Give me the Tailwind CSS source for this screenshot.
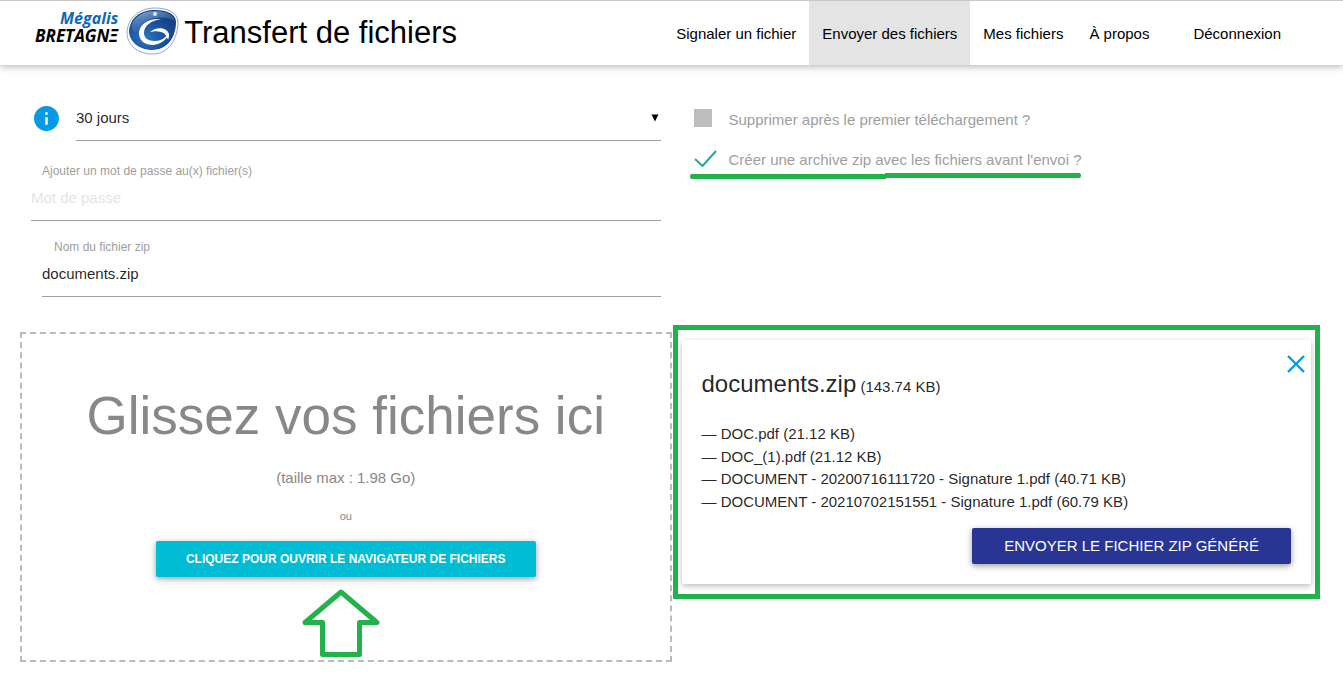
<!DOCTYPE html>
<html lang="fr">
<head>
    <meta charset="UTF-8">
    <meta name="viewport" content="width=device-width, initial-scale=1.0">
    <title>Mégalis Bretagne - Transfert de fichiers</title>
    <script src="https://cdn.jsdelivr.net/npm/@tailwindcss/browser@4"></script>
</head>
<body class="bg-white min-h-screen font-['Liberation_Sans',Arial,sans-serif] text-[15px] text-black/87">

    <!-- Header -->
    <header class="flex justify-between h-[65px] border-t border-[#c8c8c8] bg-white text-black shadow-[0_2px_5px_0_rgba(0,0,0,0.16),0_2px_10px_0_rgba(0,0,0,0.12)]">
        <a href="#" class="flex items-center pl-[35px]" aria-label="Mégalis Bretagne, transfert de fichiers">
            <span class="flex flex-col items-end pb-3 font-['Open_Sans',sans-serif] font-bold italic leading-[18px]">
                <span class="text-base leading-[18px] text-[#0f6ab4]">Mégalis</span>
                <span class="text-[17px] leading-[18px] text-black">BRETAGNΞ</span>
            </span>
            <svg class="ml-2 mb-1 w-[54px] h-[50px]" viewBox="0 0 54 50" aria-hidden="true">
                <defs>
                    <radialGradient id="globe" cx="0.35" cy="0.7" r="0.8">
                        <stop offset="0" stop-color="#2a74be"/>
                        <stop offset="0.5" stop-color="#1b529c"/>
                        <stop offset="1" stop-color="#133b7a"/>
                    </radialGradient>
                    <linearGradient id="shine" x1="0" y1="0" x2="0.6" y2="1">
                        <stop offset="0" stop-color="#a9c3e0" stop-opacity="0.9"/>
                        <stop offset="1" stop-color="#2a66ae" stop-opacity="0.1"/>
                    </linearGradient>
                </defs>
                <path d="M1 26C2 12 13 2 29 2c13 0 23 5 23 14 0 16-9 32-25 32C11 48 1 39 1 26z" fill="#fff" stroke="#8fa9c6"/>
                <path d="M3 25C4 12 14 4 29 4c12 0 21 4 21 12 0 14-8 28-23 28C12 44 3 36 3 25z" fill="url(#globe)"/>
                <path d="M6 18C10 9 18 5 29 5c11 0 20 4 20 10-5-3-12-4-18-3-10 1-17 6-20 15-4-1-6-4-5-9z" fill="url(#shine)"/>
                <path d="M3 28c3 10 12 16 23 16 9 0 15-4 19-10-2 8-9 13-18 13C14 47 4 39 3 28z" fill="#fff" opacity="0.7"/>
                <path d="M35 13c-12-1-22 5-22 14 0 8 6 12 14 12 8-1 14-5 16-12-4 5-8 8-14 8-7 0-11-3-11-8 0-7 6-12 17-14z" fill="#fff"/>
                <path d="M24 26c4-4 12-5 16-2 3 2 4 5 2 10-1-4-3-7-7-8-3-1-7-1-11 0z" fill="#fff"/>
                <circle cx="29" cy="8" r="2" fill="#dfeaf6"/>
            </svg>
            <span class="ml-1 text-[31px] leading-[64px]">Transfert de fichiers</span>
        </a>
        <nav class="flex pr-[49px] leading-[66px]">
            <a href="#" class="h-full px-[13px]">Signaler un fichier</a>
            <a href="#" class="h-full px-[13px] bg-[#e4e4e4]">Envoyer des fichiers</a>
            <a href="#" class="h-full px-[13px]">Mes fichiers</a>
            <a href="#" class="h-full px-[13px]">À propos</a>
            <a href="#" class="h-full px-[13px] ml-[18px]">Déconnexion</a>
        </nav>
    </header>

    <main class="px-5 pt-[31px] pb-4">
        <!-- Options -->
        <form class="grid grid-cols-2">
            <div class="px-[11px]">
                <div class="flex items-center">
                    <svg class="ml-[3px] mr-[17px] w-[25px] h-[25px] shrink-0" viewBox="2 2 20 20" fill="#039be5" aria-hidden="true">
                        <path d="M12 2C6.48 2 2 6.48 2 12s4.480 10 10 10 10-4.480 10-10S17.520 2 12 2zm1 15h-2v-6h2v6zm0-8h-2V7h2v2z"/>
                    </svg>
                    <div class="relative grow">
                        <select aria-label="Durée de conservation" class="block appearance-none w-full h-[45px] border-b border-[#9e9e9e] bg-transparent outline-none">
                            <option>30 jours</option>
                        </select>
                        <svg class="absolute right-[2px] top-[18px] w-2 h-2 pointer-events-none" viewBox="0 0 8 8" aria-hidden="true">
                            <path d="M0.500 0.500h7L4 7.500z"/>
                        </svg>
                    </div>
                </div>
                <div class="mt-[22px]">
                    <label for="password" class="block pl-[11px] text-xs leading-4 text-[#9e9e9e]">Ajouter un mot de passe au(x) fichier(s)</label>
                    <input type="password" id="password" placeholder="Mot de passe" class="block w-full h-[42px] pb-1 border-b border-[#9e9e9e] outline-none placeholder:text-[#e4e4e4]">
                </div>
                <div class="mt-[18px] pl-[11px]">
                    <label for="zip-name" class="block pl-3 text-xs leading-4 text-[#9e9e9e]">Nom du fichier zip</label>
                    <input type="text" id="zip-name" value="documents.zip" class="block w-full h-[42px] pb-1 border-b border-[#9e9e9e] outline-none">
                </div>
            </div>
            <div class="flex flex-col items-start pl-[22px] pt-3 text-[#9e9e9e]">
                <label class="flex items-start h-6 leading-6">
                    <input type="checkbox" disabled class="appearance-none w-[18px] h-[18px] mt-px mr-[17px] bg-[#bdbdbd]">
                    Supprimer après le premier téléchargement ?
                </label>
                <label class="flex items-start h-6 mt-4 leading-6">
                    <span class="grid w-[35px] mt-px">
                        <input type="checkbox" checked class="col-start-1 row-start-1 appearance-none w-6 h-[18px]">
                        <svg class="col-start-1 row-start-1 w-6 h-[18px] pointer-events-none" viewBox="0 0 24 18" fill="none" stroke="#26a69a" stroke-width="2" aria-hidden="true">
                            <path d="M1 10L8.500 17 22 2"/>
                        </svg>
                    </span>
                    Créer une archive zip avec les fichiers avant l'envoi ?
                </label>
                <svg class="-ml-1 mt-px w-[391px] h-[6px]" viewBox="0 0 391 6" fill="#22b14c" aria-hidden="true">
                    <path d="M1 1h194V0h195l1 2v1l-1 2H196v1H1L0 4V3z"/>
                </svg>
            </div>
        </form>

        <div class="grid grid-cols-2 items-start mt-7">
            <!-- Drop zone -->
            <section class="flex flex-col items-center mt-[7px] h-[330px] border-2 border-dashed border-[#bbb] text-[#888]">
                <h2 class="mt-[50px] text-[53px] leading-[64px]">Glissez vos fichiers ici</h2>
                <p class="mt-[18px] leading-6">(taille max : 1.98 Go)</p>
                <p class="mt-[18px] text-[11px] leading-4">ou</p>
                <button type="button" class="mt-[17px] h-9 px-[30px] rounded-xs bg-[#00bcd4] text-white text-xs font-bold uppercase shadow-[0_2px_5px_0_rgba(0,0,0,0.26),0_2px_10px_0_rgba(0,0,0,0.16)]">Cliquez pour ouvrir le navigateur de fichiers</button>
                <svg class="mt-3 mr-[9px] w-[78px] h-[68px] shrink-0" viewBox="0 0 78 68" fill="none" stroke="#22b14c" stroke-width="5" stroke-linejoin="round" aria-hidden="true">
                    <path d="M39 3L75 33.500H57.500V65.500H20.500V33.500H3z"/>
                </svg>
            </section>

            <!-- Generated archive -->
            <section class="ml-px mr-[3px] border-[5px] border-[#22b14c] px-1 py-[10px]">
                <div class="relative h-[244px] px-5 pt-7 rounded-xs shadow-[0_2px_5px_0_rgba(0,0,0,0.16),0_2px_10px_0_rgba(0,0,0,0.12)]">
                    <button type="button" aria-label="Supprimer" class="absolute right-[6px] top-[15px]">
                        <svg class="w-[18px] h-[18px]" viewBox="0 0 18 18" fill="none" stroke="#039be5" stroke-width="2.400" aria-hidden="true">
                            <path d="M1 1l16 16M17 1L1 17"/>
                        </svg>
                    </button>
                    <h3 class="leading-8"><span class="text-2xl leading-8">documents.zip</span> (143.74 KB)</h3>
                    <ul class="mt-5 leading-normal">
                        <li>— DOC.pdf (21.12 KB)</li>
                        <li>— DOC_(1).pdf (21.12 KB)</li>
                        <li>— DOCUMENT - 20200716111720 - Signature 1.pdf (40.71 KB)</li>
                        <li>— DOCUMENT - 20210702151551 - Signature 1.pdf (60.79 KB)</li>
                    </ul>
                    <div class="flex justify-end mt-[15px]">
                        <button type="button" class="h-9 px-8 rounded-xs bg-[#283593] text-white uppercase shadow-[0_2px_5px_0_rgba(0,0,0,0.26),0_2px_10px_0_rgba(0,0,0,0.16)]">Envoyer le fichier zip généré</button>
                    </div>
                </div>
            </section>
        </div>
    </main>

</body>
</html>
